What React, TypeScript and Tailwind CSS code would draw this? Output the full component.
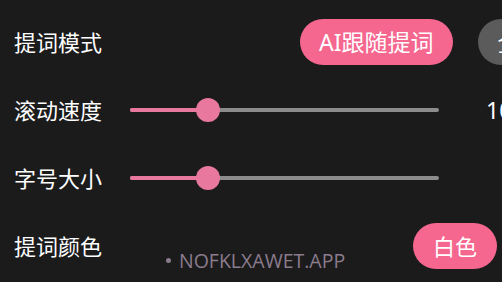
import React from 'react';

const cjk = { fontFamily: '"Noto Sans", "Noto Sans CJK SC", sans-serif' };

function Slider({ filled }: { filled: number }) {
  return (
    <div className="relative h-[4px] w-[309px] rounded-full bg-[#8c8c8c]">
      <div className="h-full rounded-full bg-[#e8789d]" style={{ width: filled }} />
      <div
        className="absolute top-1/2 h-[24px] w-[24px] -translate-y-1/2 rounded-full bg-[#e8789d]"
        style={{ left: filled - 12 }}
      />
    </div>
  );
}

export default function App() {
  return (
    <div className="relative h-[282px] w-[502px] overflow-hidden bg-[#1b1b1c] text-white" style={cjk}>
      <div className="flex w-[640px] flex-col pl-[14px] pt-[8px]">
        {/* 提词模式 */}
        <div className="flex h-[68px] items-center">
          <div className="w-[286px] text-[22px]">提词模式</div>
          <div className="flex gap-[25px]">
            <div className="flex h-[46px] items-center rounded-full bg-[#f5678f] px-[19px] text-[23px]">AI跟随提词</div>
            <div className="flex h-[46px] items-center rounded-full bg-[#5b5b5b] px-[20px] text-[23px]">全屏提词</div>
          </div>
        </div>

        {/* 滚动速度 */}
        <div className="flex h-[68px] items-center">
          <div className="w-[116px] text-[22px]">滚动速度</div>
          <Slider filled={78} />
          <div className="ml-[47px] text-[23px]">10</div>
        </div>

        {/* 字号大小 */}
        <div className="flex h-[68px] items-center">
          <div className="w-[116px] text-[22px]">字号大小</div>
          <Slider filled={78} />
        </div>

        {/* 提词颜色 */}
        <div className="flex h-[68px] items-center">
          <div className="w-[399px] text-[22px]">提词颜色</div>
          <div className="flex h-[46px] items-center rounded-full bg-[#f5678f] px-[20px] text-[22px]">白色</div>
        </div>
      </div>

      {/* watermark */}
      <div
        className="absolute left-[166px] top-[246px] flex items-center gap-[8px] text-[19.5px] text-[#8b7c8d]"
        style={{ fontFamily: '"Open Sans", sans-serif' }}
      >
        <span className="h-[5px] w-[5px] rounded-full bg-[#8b7c8d]" />
        <span>NOFKLXAWET.APP</span>
      </div>
    </div>
  );
}
